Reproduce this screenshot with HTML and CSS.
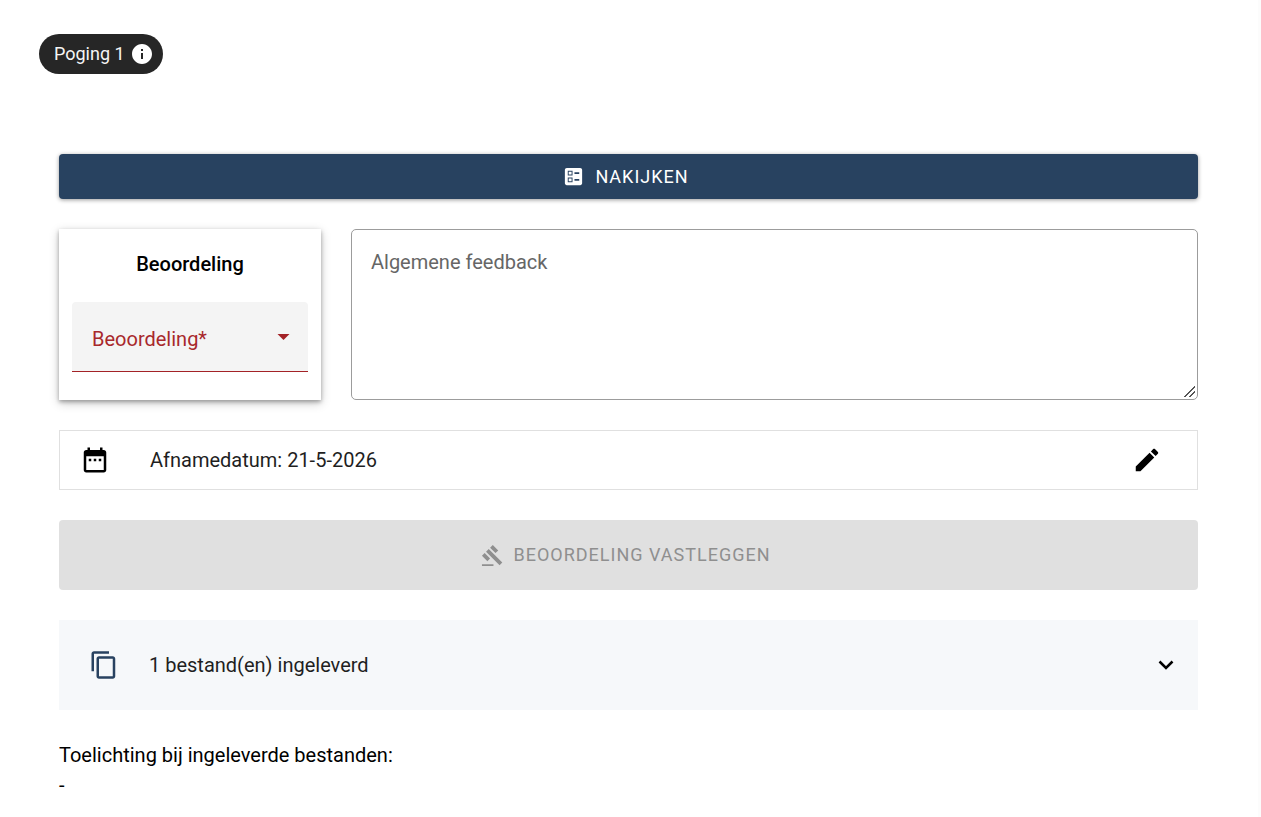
FILE: index.html
```html
<!DOCTYPE html>
<html lang="nl">
<head>
    <meta charset="UTF-8">
    <meta name="viewport" content="width=device-width, initial-scale=1.0">
    <title>Beoordeling</title>
    <link rel="stylesheet" href="styles.css">
</head>
<body>
    <!-- Pogingen -->
    <header class="attempts">
        <button type="button" class="chip">
            Poging 1
            <svg class="chip-icon" viewBox="2 2 20 20" aria-hidden="true"><path d="M12 2C6.480 2 2 6.480 2 12s4.480 10 10 10 10-4.480 10-10S17.520 2 12 2zm1 15h-2v-6h2v6zm0-8h-2V7h2v2z"/></svg>
        </button>
    </header>

    <main class="content">
        <button type="button" class="btn btn-primary">
            <svg class="btn-icon" viewBox="0 0 24 24" aria-hidden="true"><path d="M13 9.500h5v-2h-5v2zm0 7h5v-2h-5v2zM19 21H5c-1.100 0-2-.9-2-2V5c0-1.100.9-2 2-2h14c1.100 0 2 .9 2 2v14c0 1.100-.9 2-2 2zM6 11h5V6H6v5zm1-4h3v3H7V7zM6 18h5v-5H6v5zm1-4h3v3H7v-3z"/></svg>
            Nakijken
        </button>

        <!-- Beoordeling en feedback -->
        <form class="grading">
            <div class="card">
                <label class="card-title" for="grade">Beoordeling</label>
                <div class="select-field">
                    <select id="grade" required>
                        <option value="">Beoordeling*</option>
                    </select>
                    <svg class="select-arrow" viewBox="0 0 14 7" aria-hidden="true"><path d="M0 0h14L7 7z"/></svg>
                </div>
            </div>
            <textarea class="feedback" placeholder="Algemene feedback" aria-label="Algemene feedback"></textarea>
        </form>

        <!-- Afnamedatum -->
        <div class="date-row">
            <svg class="icon" viewBox="0 0 24 24" aria-hidden="true"><path d="M9 11H7v2h2v-2zm4 0h-2v2h2v-2zm4 0h-2v2h2v-2zm2-7h-1V2h-2v2H8V2H6v2H5c-1.110 0-1.990.9-1.990 2L3 20c0 1.100.890 2 2 2h14c1.100 0 2-.9 2-2V6c0-1.100-.9-2-2-2zm0 16H5V9h14v11z"/></svg>
            <span>Afnamedatum: 21-5-2026</span>
            <button type="button" class="icon-button" aria-label="Wijzigen">
                <svg class="icon" viewBox="0 0 24 24" aria-hidden="true"><path d="M3 17.250V21h3.750L17.810 9.940l-3.750-3.750L3 17.250zM20.710 7.040c.390-.390.390-1.020 0-1.410l-2.340-2.340c-.390-.390-1.020-.390-1.410 0l-1.830 1.830 3.750 3.750 1.830-1.830z"/></svg>
            </button>
        </div>

        <button type="button" class="btn btn-submit" disabled>
            <svg class="btn-icon" viewBox="0 0 24 24" aria-hidden="true"><path d="M1 21h12v2H1zM5.245 8.070l2.830-2.827 14.140 14.142-2.828 2.828zM12.317 1l5.657 5.656-2.830 2.830-5.654-5.660zM3.825 9.485l5.657 5.657-2.828 2.828-5.657-5.657z"/></svg>
            Beoordeling vastleggen
        </button>

        <!-- Ingeleverde bestanden -->
        <button type="button" class="files" aria-expanded="false">
            <svg class="icon files-icon" viewBox="0 0 24 24" aria-hidden="true"><path d="M16 1H4c-1.100 0-2 .9-2 2v14h2V3h12V1zm3 4H8c-1.100 0-2 .9-2 2v14c0 1.100.9 2 2 2h11c1.100 0 2-.9 2-2V7c0-1.100-.9-2-2-2zm0 16H8V7h11v14z"/></svg>
            <span>1 bestand(en) ingeleverd</span>
            <svg class="chevron" viewBox="0 0 16 10" aria-hidden="true"><path d="M1.500 1.500L8 8l6.500-6.500"/></svg>
        </button>

        <section class="notes">
            <p>Toelichting bij ingeleverde bestanden:</p>
            <p>-</p>
        </section>
    </main>
</body>
</html>
```
FILE: styles.css
```css
* {
    box-sizing: border-box;
}
body {
    margin: 0;
    min-height: 100vh;
    border-right: 3px solid #fcfcfc;
    background-color: #fff;
    color: #000;
    font-family: Roboto, sans-serif;
    font-size: 20px;
    line-height: 30px;
}
button, select, textarea {
    font: inherit;
    color: inherit;
}
button {
    border: none;
    cursor: pointer;
}
svg {
    flex: none;
    fill: currentColor;
}
.attempts {
    display: flex;
    padding: 34px 39px 0;
}
.chip {
    display: flex;
    align-items: center;
    gap: 7px;
    height: 40px;
    padding: 0 11px 0 15px;
    border-radius: 20px;
    background-color: #262626;
    color: #f5f5f5;
    font-size: 18px;
}
.chip-icon {
    width: 20px;
    height: 20px;
    fill: #fff;
}
.content {
    display: flex;
    flex-direction: column;
    gap: 30px;
    padding: 80px 60px 16px 59px;
}
.btn {
    display: flex;
    align-items: center;
    justify-content: center;
    gap: 10px;
    padding: 0 6px 0 0;
    border-radius: 4px;
    font-size: 18px;
    letter-spacing: 1px;
    text-transform: uppercase;
}
.btn-icon {
    width: 23px;
    height: 23px;
}
.btn-primary {
    height: 45px;
    background-color: #284260;
    color: #fff;
    box-shadow: 0 1px 4px rgba(0, 0, 0, 0.4);
}
.btn-submit {
    height: 70px;
    background-color: #e0e0e0;
    color: #8f8f8f;
    cursor: default;
}
.grading {
    display: grid;
    grid-template-columns: 23% 1fr;
    gap: 30px;
}
.card {
    display: flex;
    flex-direction: column;
    gap: 23px;
    padding: 20px 13px 28px;
    box-shadow: 0 2px 4px rgba(0, 0, 0, 0.3), 0 3px 10px rgba(0, 0, 0, 0.2);
}
.card-title {
    font-weight: 500;
    text-align: center;
}
.select-field {
    position: relative;
}
.select-field select {
    display: block;
    width: 100%;
    height: 70px;
    padding: 4px 40px 0 20px;
    appearance: none;
    border: none;
    border-bottom: 1px solid #a32226;
    border-radius: 4px 4px 0 0;
    background-color: #f4f4f4;
    color: #a8282c;
}
.select-arrow {
    position: absolute;
    right: 18px;
    top: 32px;
    width: 13px;
    height: 6px;
    fill: #a32226;
    pointer-events: none;
}
.feedback {
    display: block;
    width: 100%;
    min-height: 171px;
    padding: 17px 19px;
    border: 1px solid #9c9c9c;
    border-radius: 5px;
    resize: vertical;
}
.feedback::placeholder {
    color: #666;
}
/* Greep rechtsonder: twee schuine streepjes */
.feedback::-webkit-resizer {
    background: linear-gradient(135deg, transparent 46%, #555 46%, #555 56%, transparent 56%, transparent 70%, #555 70%, #555 80%, transparent 80%) center / 11px 11px no-repeat;
}
.date-row, .files {
    display: flex;
    align-items: center;
    color: #1f1f1f;
    text-align: left;
}
.date-row {
    gap: 40px;
    height: 60px;
    padding: 0 35px 0 20px;
    border: 1px solid #e0e0e0;
}
.icon {
    display: block;
    width: 30px;
    height: 30px;
    color: #000;
}
.icon-button {
    margin-left: auto;
    padding: 0;
    background: none;
}
.files {
    gap: 30px;
    height: 90px;
    padding: 0 24px 0 30px;
    background-color: #f6f8fa;
}
.files .files-icon {
    color: #284260;
}
.chevron {
    width: 16px;
    height: 10px;
    margin-left: auto;
    fill: none;
    stroke: #000;
    stroke-width: 2.500;
}
.notes p {
    margin: 0;
}
```
